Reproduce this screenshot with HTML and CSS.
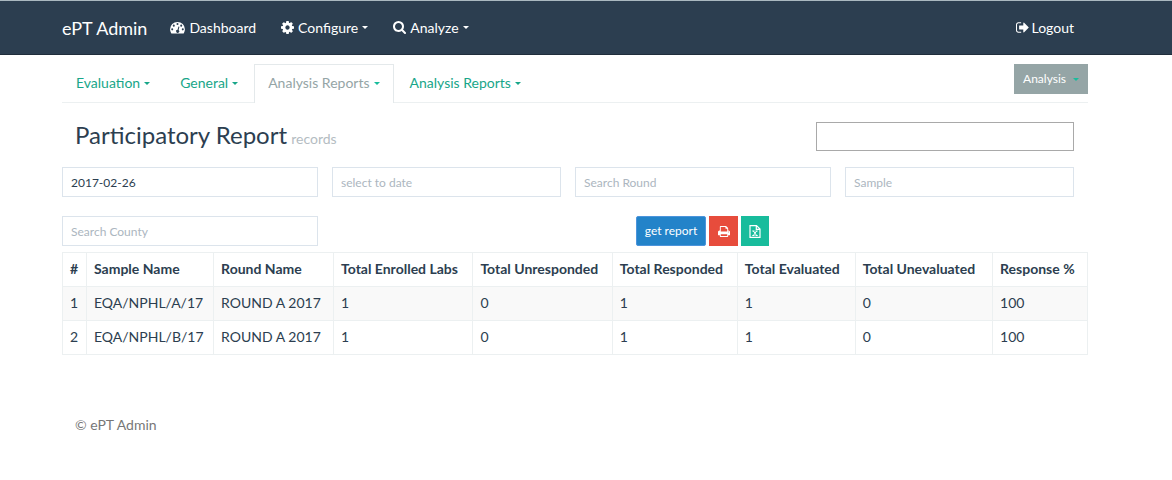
FILE: index.html
```html
<!DOCTYPE html>
<html lang="en">
<head>
<meta charset="utf-8">
<title>ePT Admin</title>
<link rel="stylesheet" href="styles.css">
</head>
<body>
<header class="navbar">
  <nav class="navbar-inner">
    <a class="brand" href="#">ePT Admin</a>
    <a class="nav-link" href="#"><svg class="icon icon-wide" viewBox="0 0 16 14"><path fill="currentColor" fill-rule="evenodd" d="M8 1a8 8 0 0 1 8 8q0 2.300-1.200 4.200-.2.300-.6.300H1.800q-.4 0-.6-.3Q0 11.300 0 9a8 8 0 0 1 8-8zM2.300 7.900a1.100 1.100 0 1 0 0 2.200 1.100 1.100 0 0 0 0-2.200zM4 3.900a1.100 1.100 0 1 0 0 2.200 1.100 1.100 0 0 0 0-2.200zM8 2.200a1.100 1.100 0 1 0 0 2.200 1.100 1.100 0 0 0 0-2.200zM12 3.900a1.100 1.100 0 1 0 0 2.200 1.100 1.100 0 0 0 0-2.200zM13.700 7.900a1.100 1.100 0 1 0 0 2.200 1.100 1.100 0 0 0 0-2.200zM9 5.800l-.9 3.500a1.700 1.700 0 1 0 1.100.3l.9-3.500z"/></svg>Dashboard</a>
    <a class="nav-link" href="#"><svg class="icon" viewBox="0 -128 1536 1536"><path fill="currentColor" fill-rule="evenodd" d="M1024 640q0 106-75 181t-181 75-181-75-75-181 75-181 181-75 181 75 75 181zm512-109v222q0 12-8 23t-20 13l-185 28q-19 54-39 91 35 50 107 138 10 12 10 25t-9 23q-27 37-99 108t-94 71q-12 0-26-9l-138-108q-44 23-91 38-16 136-29 186-7 28-36 28h-222q-14 0-24.500-8.500t-11.500-21.500l-28-184q-49-16-90-37l-141 107q-10 9-25 9-14 0-25-11-126-114-165-168-7-10-7-23 0-12 8-23 15-21 51-66.500t54-70.500q-27-50-41-99l-183-27q-13-2-21-12.500t-8-23.500v-222q0-12 8-23t19-13l186-28q14-46 39-92-40-57-107-138-10-12-10-24 0-10 9-23 26-36 98.500-107.500t94.500-71.500q13 0 26 10l138 107q44-23 91-38 16-136 29-186 7-28 36-28h222q14 0 24.500 8.500t11.500 21.500l28 184q49 16 90 37l142-107q9-9 24-9 13 0 25 10 129 119 165 170 7 8 7 22 0 12-8 23-15 21-51 66.500t-54 70.500q26 50 41 98l183 28q13 2 21 12.500t8 23.500z"/></svg>Configure<span class="caret"></span></a>
    <a class="nav-link" href="#"><svg class="icon" viewBox="64 128 1664 1664"><path fill="currentColor" d="M1216 832q0-185-131.500-316.500t-316.500-131.500-316.500 131.500-131.500 316.500 131.500 316.500 316.500 131.500 316.500-131.500 131.500-316.500zm512 832q0 52-38 90t-90 38q-54 0-90-38l-343-342q-179 124-399 124-143 0-273.500-55.500t-225-150-150-225-55.500-273.500 55.500-273.500 150-225 225-150 273.500-55.500 273.500 55.500 225 150 150 225 55.500 273.500q0 220-124 399l343 343q37 37 37 90z"/></svg>Analyze<span class="caret"></span></a>
    <a class="nav-link nav-logout" href="#"><svg class="icon" viewBox="64 128 1600 1536"><path fill="currentColor" d="M704 1440q0 4 1 20t.5 26.500-3 23.500-10 19.500-20.500 6.500h-320q-119 0-203.500-84.500t-84.500-203.500v-704q0-119 84.500-203.500t203.500-84.500h320q13 0 22.500 9.500t9.500 22.500q0 4 1 20t.5 26.500-3 23.500-10 19.500-20.500 6.500h-320q-66 0-113 47t-47 113v704q0 66 47 113t113 47h312l11.500 1 11.500 3 8 5.500 7 9 2 13.500zm928-544q0 26-19 45l-544 544q-19 19-45 19t-45-19-19-45v-288h-448q-26 0-45-19t-19-45v-384q0-26 19-45t45-19h448v-288q0-26 19-45t45-19 45 19l544 544q19 19 19 45z"/></svg>Logout</a>
  </nav>
</header>
<main class="container">
  <nav class="tabs">
    <a class="tab" href="#">Evaluation<span class="caret"></span></a>
    <a class="tab" href="#">General<span class="caret"></span></a>
    <a class="tab tab-active" href="#">Analysis Reports<span class="caret"></span></a>
    <a class="tab" href="#">Analysis Reports<span class="caret"></span></a>
    <button class="btn btn-analysis" type="button">Analysis<span class="caret"></span></button>
  </nav>
  <div class="heading">
    <h1 class="title">Participatory Report <small class="subtitle">records</small></h1>
    <input class="search" type="text" aria-label="Search records">
  </div>
  <form class="filters">
    <input class="field" type="text" value="2017-02-26" aria-label="From date">
    <input class="field" type="text" placeholder="select to date" aria-label="To date">
    <input class="field" type="text" placeholder="Search Round" aria-label="Round">
    <input class="field" type="text" placeholder="Sample" aria-label="Sample">
    <input class="field" type="text" placeholder="Search County" aria-label="County">
    <div class="actions">
      <button class="btn btn-report" type="button">get report</button>
      <button class="btn btn-print" type="button" aria-label="Print"><svg class="icon-small" viewBox="64 128 1664 1536"><path fill="currentColor" d="M448 1536h896v-256h-896v256zm0-640h896v-384h-160q-40 0-68-28t-28-68v-160h-640v640zm1152 64q0-26-19-45t-45-19-45 19-19 45 19 45 45 19 45-19 19-45zm128 0v416q0 13-9.500 22.500t-22.500 9.500h-224v160q0 40-28 68t-68 28h-960q-40 0-68-28t-28-68v-160h-224q-13 0-22.500-9.500t-9.500-22.500v-416q0-79 56.500-135.500t135.500-56.500h64v-544q0-40 28-68t68-28h672q40 0 88 20t76 48l152 152q28 28 48 76t20 88v256h64q79 0 135.500 56.500t56.500 135.500z"/></svg></button>
      <button class="btn btn-excel" type="button" aria-label="Export to Excel"><svg class="icon-small" viewBox="0 0 12 13" fill="none" stroke="currentColor"><path stroke-width="1.200" d="M1 .6h6.500l3.500 3.500v8.300H1zM7.300.6v3.700H11"/><path d="M4.300 6l3.400 4.500M7.700 6l-3.400 4.500M3.300 6h2.200M6.500 6h2.200M3.300 10.500h2.200M6.500 10.500h2.200"/></svg></button>
    </div>
  </form>
  <table class="report">
    <colgroup><col class="c-num"><col class="c-sample"><col class="c-round"><col class="c-wide"><col class="c-wide"><col class="c-resp"><col class="c-eval"><col class="c-uneval"><col class="c-rate"></colgroup>
    <thead>
      <tr><th>#</th><th>Sample Name</th><th>Round Name</th><th>Total Enrolled Labs</th><th>Total Unresponded</th><th>Total Responded</th><th>Total Evaluated</th><th>Total Unevaluated</th><th>Response %</th></tr>
    </thead>
    <tbody>
      <tr><td>1</td><td>EQA/NPHL/A/17</td><td>ROUND A 2017</td><td>1</td><td>0</td><td>1</td><td>1</td><td>0</td><td>100</td></tr>
      <tr><td>2</td><td>EQA/NPHL/B/17</td><td>ROUND A 2017</td><td>1</td><td>0</td><td>1</td><td>1</td><td>0</td><td>100</td></tr>
    </tbody>
  </table>
  <footer class="footer">© ePT Admin</footer>
</main>
</body>
</html>
```
FILE: styles.css
```css
* { box-sizing: border-box; }
body {
  margin: 0;
  background: #fff;
  color: #2c3e50;
  font: 14px/20px Lato, sans-serif;
}
a { text-decoration: none; }
.navbar {
  background: #2c3e50;
  border-top: 1px solid #aab8c0;
  border-bottom: 1px solid #202d3b;
  padding: 0 84px 0 62px;
}
.navbar-inner { display: flex; align-items: center; height: 53px; padding-right: 14px; }
.brand { color: #fff; font-size: 18px; margin-right: 23px; }
.nav-link { display: flex; align-items: center; color: #fff; margin-right: 25px; }
.nav-logout { margin: 0 0 0 auto; }
.icon { width: 13px; height: 13px; margin-right: 4px; }
.icon-wide { width: 15px; }
.nav-logout .icon { margin-right: 2px; }
.icon-small { width: 12px; height: 13px; }
.caret {
  margin-left: 4px;
  border: 3px solid transparent;
  border-top-color: currentColor;
  border-bottom: 0;
}
.container { padding: 9px 84px 0 62px; }
.tabs { display: flex; border-bottom: 1px solid #ecf0f1; }
.tab {
  display: flex;
  align-items: center;
  height: 39px;
  margin: 0 2px -1px 0;
  padding: 0 13px 2px;
  border: 1px solid transparent;
  border-bottom: 0;
  color: #18a689;
}
.tab-active { background: #fff; border-color: #e4e9eb; color: #95a5a6; }
.tab-active .caret { border-top-color: #18bc9c; }
.btn {
  display: inline-flex;
  align-items: center;
  justify-content: center;
  height: 30px;
  padding: 0;
  border: 0;
  color: #fff;
  font: 12px/18px Lato, sans-serif;
  white-space: nowrap;
}
.btn-analysis { margin-left: auto; padding: 0 9px; background: #95a5a6; }
.btn-analysis .caret { margin-left: 7px; color: #18bc9c; }
.heading {
  display: flex;
  justify-content: space-between;
  align-items: center;
  padding: 16px 14px 10px 13px;
}
.title { margin: 0; font-size: 24px; line-height: 28px; font-weight: 400; }
.subtitle { margin-left: -2px; color: #b4bcc2; font-size: 14px; line-height: 14px; }
.search { width: 258px; height: 29px; margin-top: 3px; border: 1px solid #a9a9a9; }
.filters {
  display: grid;
  grid-template-columns: 256fr 229fr 256fr 229fr;
  gap: 19px 14px;
  padding: 6px 14px 6px 0;
}
.field {
  width: 100%;
  min-width: 0;
  height: 30px;
  padding: 0 8px;
  border: 1px solid #dce4ec;
  color: #2c3e50;
  font: 12px/18px Lato, sans-serif;
}
.field::placeholder { color: #acb6c0; opacity: 1; }
.actions { grid-column: 3; display: flex; gap: 3px; padding-left: 61px; }
.btn-report { width: 70px; background: #2383c9; border: 1px solid #4c94dc; border-radius: 2px; }
.btn-print { width: 29px; background: #e74c3c; }
.btn-excel { width: 28px; background: #18bc9c; }
.report {
  width: 100%;
  table-layout: fixed;
  border-collapse: collapse;
}
.report th, .report td {
  height: 34px;
  padding: 0 7px 2px;
  border: 1px solid #ecf0f1;
  text-align: left;
  white-space: nowrap;
}
.report th { font-weight: 700; }
.report tbody tr:nth-child(odd) { background: #f9f9f9; }
.c-num { width: 24px; }
.c-sample { width: 12.400%; }
.c-round { width: 11.700%; }
.c-wide { width: 13.600%; }
.c-resp { width: 12.200%; }
.c-eval { width: 11.500%; }
.c-uneval { width: 13.400%; }
.footer { padding: 60px 13px 30px; color: #777; }
```
